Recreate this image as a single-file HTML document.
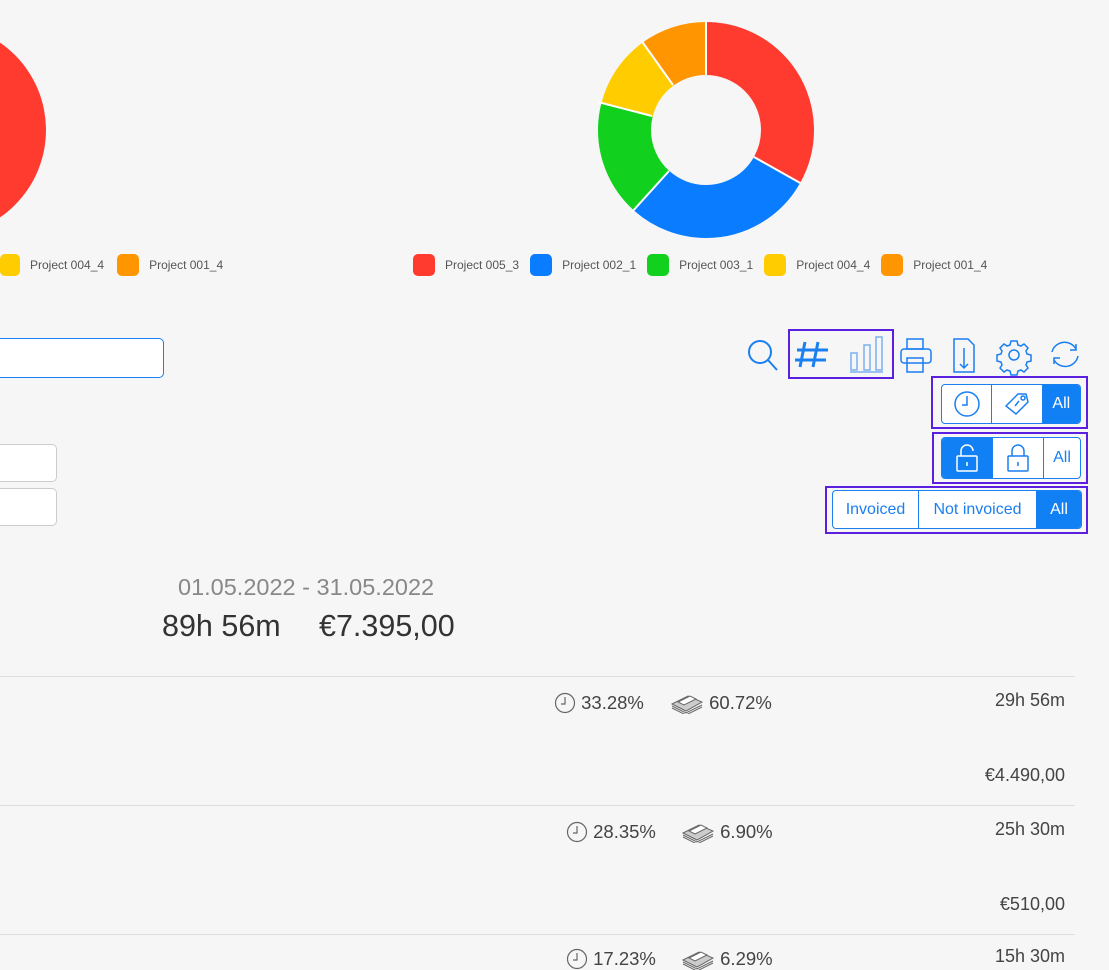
<!DOCTYPE html>
<html><head><meta charset="utf-8"><style>
body{margin:0;width:1109px;height:966px;background:#f6f6f6;font-family:"Liberation Sans",sans-serif;position:relative;overflow:hidden;color:#333}
.a{position:absolute}
.leg{position:absolute;top:254px;font-size:12px;color:#555;display:flex;align-items:center}
.sw{width:22px;height:22px;border-radius:5px;margin-right:10px}
.it{display:flex;align-items:center;margin-right:11px}
.grp{position:absolute;border:2px solid #5b1fe0}
.bg{position:absolute;display:flex;border:1px solid #1a7ff0;border-radius:4px;overflow:hidden;background:#fff}
.bg div{display:flex;align-items:center;justify-content:center;color:#1a7ff0;border-right:1px solid #1a7ff0;font-size:16px}
.bg div:last-child{border-right:none}
.on{background:#1280f5;color:#fff!important}
.hr{position:absolute;left:0;width:1075px;height:1px;background:#ddd}
.pc{position:absolute;font-size:18.5px;color:#444;display:flex;align-items:center}
.r{position:absolute;right:44px;font-size:18px;color:#444}
</style></head><body>
<svg class="a" style="left:0;top:0" width="1109" height="250">
<circle cx="-60" cy="130" r="106" fill="#ff3b30"/>
<g transform="rotate(-90 706 130)" fill="none" stroke-width="53">
<circle cx="706" cy="130" r="81.5" stroke="#ff3b30" stroke-dasharray="169.3 600" stroke-dashoffset="0"/>
<circle cx="706" cy="130" r="81.5" stroke="#0a7cff" stroke-dasharray="146.5 600" stroke-dashoffset="-169.3"/>
<circle cx="706" cy="130" r="81.5" stroke="#11d11e" stroke-dasharray="88.2 600" stroke-dashoffset="-315.8"/>
<circle cx="706" cy="130" r="81.5" stroke="#ffcc00" stroke-dasharray="56.9 600" stroke-dashoffset="-404"/>
<circle cx="706" cy="130" r="81.5" stroke="#ff9500" stroke-dasharray="51.2 600" stroke-dashoffset="-460.9"/>
</g>
<g stroke="#fff" stroke-width="2">
<line x1="706" y1="75" x2="706" y2="20"/>
<line x1="754" y1="157" x2="802" y2="184"/>
<line x1="669" y1="171" x2="632" y2="212"/>
<line x1="652" y1="116" x2="598" y2="102"/>
<line x1="673" y1="85" x2="641" y2="40"/>
</g>
</svg>
<div class="leg" style="left:0"><div class="it"><div class="sw" style="background:#ffcc00;width:20px"></div>Project 004_4</div><div class="it" style="margin-left:2px"><div class="sw" style="background:#ff9500"></div>Project 001_4</div></div>
<div class="leg" style="left:413px"><div class="it"><div class="sw" style="background:#ff3b30"></div>Project 005_3</div><div class="it"><div class="sw" style="background:#0a7cff"></div>Project 002_1</div><div class="it"><div class="sw" style="background:#11d11e"></div>Project 003_1</div><div class="it"><div class="sw" style="background:#ffcc00"></div>Project 004_4</div><div class="it"><div class="sw" style="background:#ff9500"></div>Project 001_4</div></div>

<div class="a" style="left:-10px;top:338px;width:172px;height:38px;border:1px solid #1a7ff0;border-radius:5px;background:#fff"></div>
<div class="a" style="left:-10px;top:444px;width:65px;height:36px;border:1px solid #ccc;border-radius:5px;background:#fff"></div>
<div class="a" style="left:-10px;top:488px;width:65px;height:36px;border:1px solid #ccc;border-radius:5px;background:#fff"></div>

<svg class="a" style="left:740px;top:330px" width="369" height="50" fill="none" stroke="#1a7ff0" stroke-width="2">
<circle cx="20" cy="22" r="11"/><line x1="28" y1="30" x2="37" y2="40"/>
<g stroke-width="3"><line x1="65" y1="12" x2="60" y2="37"/><line x1="78" y1="12" x2="73" y2="37"/><line x1="57" y1="20" x2="88" y2="20"/><line x1="55" y1="30" x2="86" y2="30"/></g>
<g stroke-width="1.5" stroke="#7ab0f0"><rect x="111" y="23" width="6" height="17"/><rect x="124" y="15" width="6" height="25"/><rect x="136" y="7" width="6" height="33"/><line x1="110" y1="42" x2="143" y2="42"/></g>
<g stroke-width="1.5"><rect x="161" y="19" width="30" height="14" rx="3"/><rect x="167" y="9" width="16" height="10"/><rect x="167" y="28" width="16" height="14"/>
<path d="M214 9h14l6 6v27h-20z"/><path d="M224 18v20m-4-4l4 4 4-4"/>
<circle cx="274" cy="25" r="5"/>
<path d="M271 11h6l1 4 3 1 3-2 4 4-2 3 1 3 4 1v6l-4 1-1 3 2 3-4 4-3-2-3 1-1 4h-6l-1-4-3-1-3 2-4-4 2-3-1-3-4-1v-6l4-1 1-3-2-3 4-4 3 2 3-1z"/>
<path d="M312 22a13 13 0 0 1 24-3m2 7a13 13 0 0 1-24 4"/><path d="M336 14v6h-6M314 34v-6h6"/></g>
</svg>
<div class="grp" style="left:788px;top:329px;width:102px;height:46px"></div>

<div class="grp" style="left:931px;top:376px;width:153px;height:49px"></div>
<div class="bg" style="left:941px;top:384px;width:138px;height:38px">
<div style="width:50px"><svg width="28" height="28" fill="none" stroke="#1a7ff0" stroke-width="1.5"><circle cx="14" cy="14" r="12"/><path d="M14 6v9h-5"/></svg></div>
<div style="width:50px"><svg width="30" height="30" fill="none" stroke="#1a7ff0" stroke-width="1.5"><path d="M4 17l12-12h8l2 8-12 12z"/><circle cx="21" cy="9" r="2"/><path d="M17 12l-4 5"/></svg></div>
<div class="on" style="width:38px">All</div></div>

<div class="grp" style="left:932px;top:432px;width:152px;height:48px"></div>
<div class="bg" style="left:941px;top:437px;width:138px;height:40px">
<div class="on" style="width:50px"><svg width="26" height="30" fill="none" stroke="#fff" stroke-width="1.5"><rect x="3" y="13" width="20" height="15" rx="1"/><path d="M7 13V8a6 6 0 0 1 12 0"/><path d="M13 19v4"/></svg></div>
<div style="width:50px"><svg width="26" height="30" fill="none" stroke="#1a7ff0" stroke-width="1.5"><rect x="3" y="13" width="20" height="15" rx="1"/><path d="M7 13V8a6 6 0 0 1 12 0v5"/><path d="M13 19v4"/></svg></div>
<div style="width:36px">All</div></div>

<div class="grp" style="left:825px;top:486px;width:259px;height:44px"></div>
<div class="bg" style="left:832px;top:490px;width:248px;height:37px">
<div style="width:85px">Invoiced</div><div style="width:117px">Not invoiced</div><div class="on" style="width:44px">All</div></div>

<div class="a" style="left:178px;top:574px;font-size:23.5px;color:#888">01.05.2022 - 31.05.2022</div>
<div class="a" style="left:162px;top:609px;font-size:30.5px;color:#333">89h 56m</div>
<div class="a" style="left:319px;top:609px;font-size:30.5px;color:#333">€7.395,00</div>

<div class="hr" style="top:676px"></div>
<div class="hr" style="top:805px"></div>
<div class="hr" style="top:934px"></div>

<svg width="0" height="0" style="position:absolute"><defs>
<symbol id="clk" viewBox="0 0 22 22"><circle cx="11" cy="11" r="9.5" fill="none" stroke="#666" stroke-width="1.2"/><path d="M11 5v7H7" fill="none" stroke="#666" stroke-width="1.2"/></symbol>
<symbol id="mon" viewBox="0 0 34 22"><path d="M2 12l16-8 14 6-16 9z" fill="#ccc" stroke="#666"/><path d="M2 14l14 7 16-8M2 16l14 7 16-8" fill="none" stroke="#666"/><path d="M8 10l12-6 6 3-12 6z" fill="#fff" stroke="#666"/></symbol></defs></svg>

<div class="pc" style="left:554px;top:692px"><svg width="22" height="22"><use href="#clk"/></svg>&nbsp;33.28%</div>
<div class="pc" style="left:670px;top:692px"><svg width="34" height="22"><use href="#mon"/></svg>&nbsp;60.72%</div>
<div class="r" style="top:690px">29h 56m</div>
<div class="r" style="top:765px">€4.490,00</div>

<div class="pc" style="left:566px;top:821px"><svg width="22" height="22"><use href="#clk"/></svg>&nbsp;28.35%</div>
<div class="pc" style="left:681px;top:821px"><svg width="34" height="22"><use href="#mon"/></svg>&nbsp;6.90%</div>
<div class="r" style="top:819px">25h 30m</div>
<div class="r" style="top:894px">€510,00</div>

<div class="pc" style="left:566px;top:948px"><svg width="22" height="22"><use href="#clk"/></svg>&nbsp;17.23%</div>
<div class="pc" style="left:681px;top:948px"><svg width="34" height="22"><use href="#mon"/></svg>&nbsp;6.29%</div>
<div class="r" style="top:946px">15h 30m</div>
</body></html>
